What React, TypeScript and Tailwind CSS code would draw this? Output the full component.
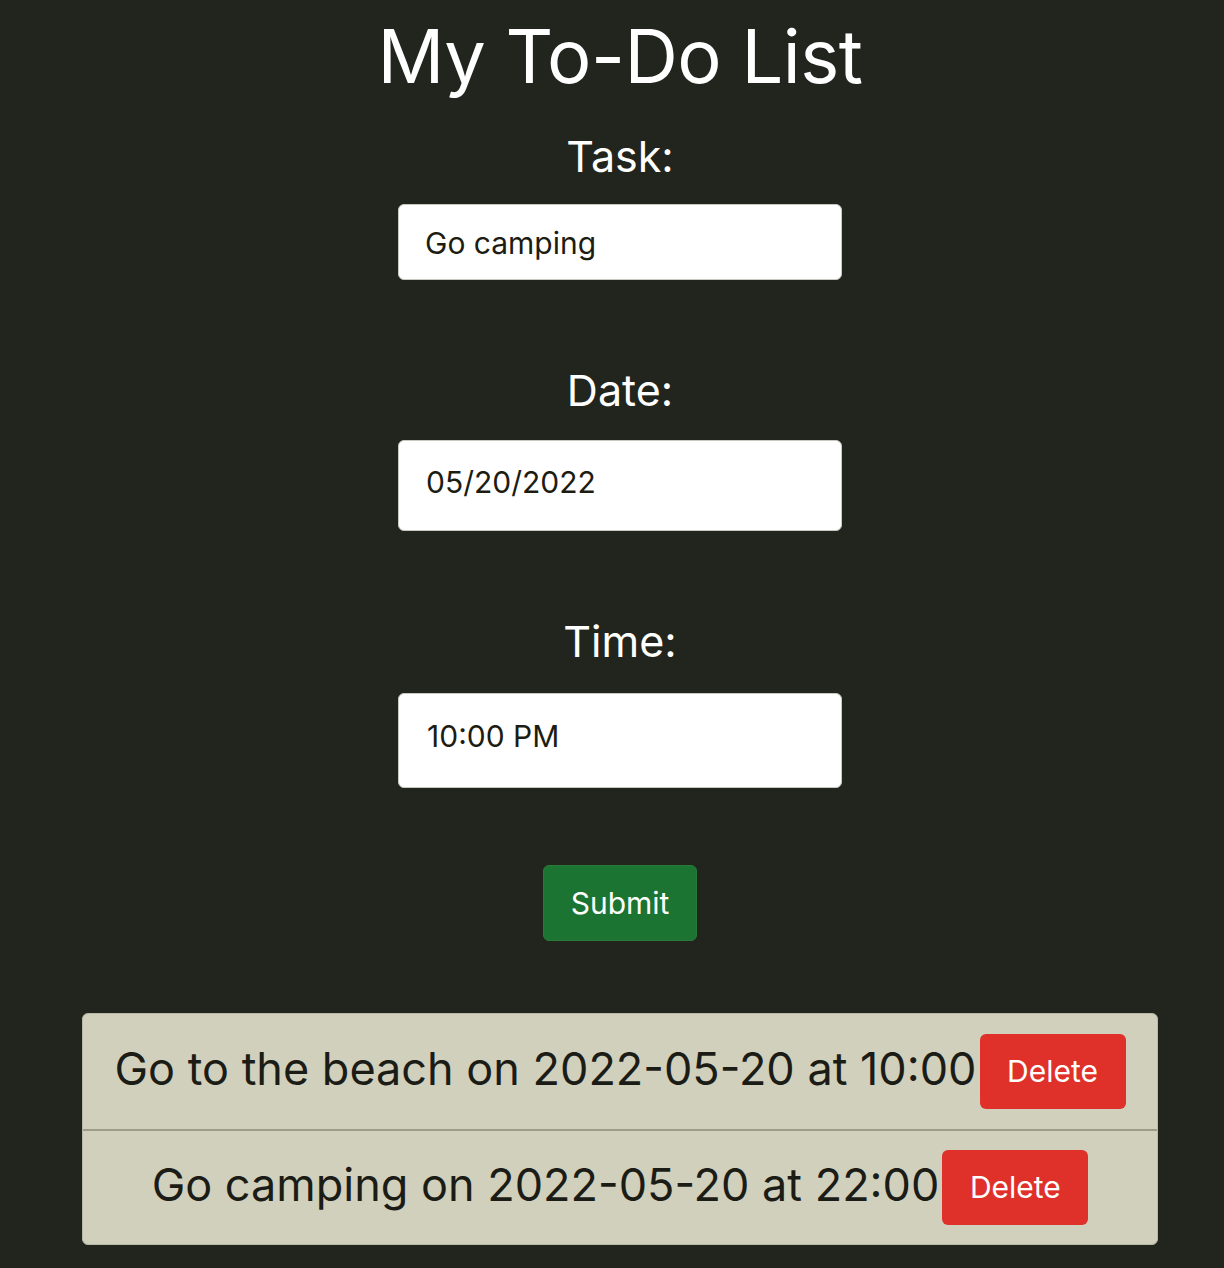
import { useState } from 'react';

type Todo = { id: number; task: string; date: string; time: string };

const initial: Todo[] = [
  { id: 1, task: 'Go to the beach', date: '2022-05-20', time: '10:00' },
  { id: 2, task: 'Go camping', date: '2022-05-20', time: '22:00' },
];

export default function App() {
  const [todos, setTodos] = useState(initial);

  return (
    <div className="h-screen overflow-hidden bg-[#22251d] text-white font-['Inter',sans-serif] flex flex-col items-center pt-[14px] pl-[16px]">
      <h1 className="text-[74px] leading-[84px] tracking-[-0.5px]">My To-Do List</h1>

      <form className="flex flex-col items-center" onSubmit={(e) => e.preventDefault()}>
        <label className="text-[43px] leading-[52px] mt-[32px]">Task:</label>
        <input
          className="mt-[22px] w-[444px] h-[76px] rounded-[6px] border border-[#c8c8c0] bg-white text-[#1c1c12] text-[30px] px-[26px] pt-[2px] outline-none"
          defaultValue="Go camping"
        />

        <label className="text-[43px] leading-[52px] mt-[84px]">Date:</label>
        <input
          className="mt-[24px] w-[444px] h-[91px] rounded-[6px] border border-[#c8c8c0] bg-white text-[#1c1c12] text-[30px] px-[27px] pb-[8px] outline-none"
          defaultValue="05/20/2022"
        />

        <label className="text-[43px] leading-[52px] mt-[84px]">Time:</label>
        <input
          className="mt-[26px] w-[444px] h-[95px] rounded-[6px] border border-[#c8c8c0] bg-white text-[#1c1c12] text-[30px] px-[28px] pb-[10px] outline-none"
          defaultValue="10:00 PM"
        />

        <button
          type="submit"
          className="mt-[77px] w-[154px] h-[76px] rounded-[6px] bg-[#1b7431] border border-[#2a7a3a] text-white text-[30px]"
        >
          Submit
        </button>
      </form>

      <ul className="mt-[72px] w-[1076px] rounded-[6px] border border-[#b8b8a8] bg-[#d1d0bc] overflow-hidden">
        {todos.map((t, i) => (
          <li
            key={t.id}
            className={`h-[115px] flex items-center justify-center gap-[3px] text-[#1c1c16] ${i > 0 ? 'border-t-2 border-[#9c9c88]' : ''}`}
          >
            <span className="text-[45px] mb-[6px]">
              {t.task} on {t.date} at {t.time}
            </span>
            <button
              onClick={() => setTodos(todos.filter((x) => x.id !== t.id))}
              className="w-[146px] h-[75px] rounded-[6px] bg-[#e0302a] text-white text-[30px]"
            >
              Delete
            </button>
          </li>
        ))}
      </ul>
    </div>
  );
}
